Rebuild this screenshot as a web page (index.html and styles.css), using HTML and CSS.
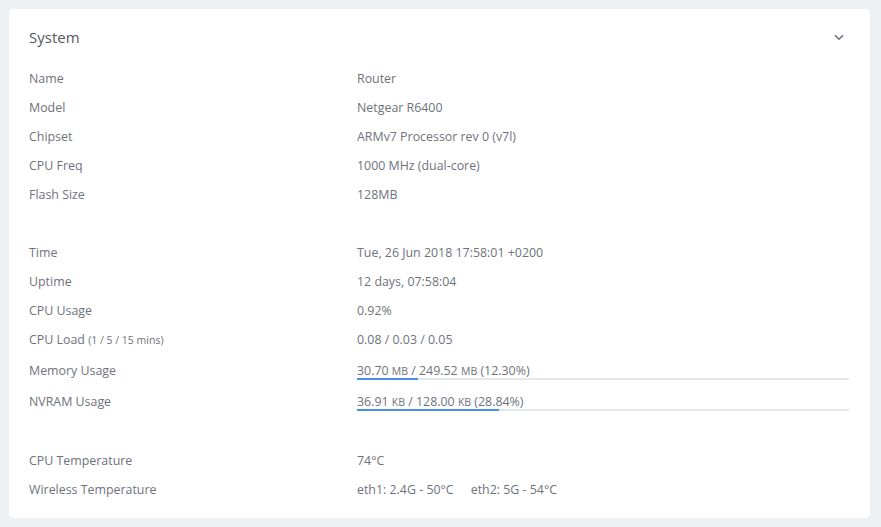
FILE: index.html
```html
<!DOCTYPE html>
<html>
<head>
<meta charset="utf-8">
<link rel="stylesheet" href="styles.css">
</head>
<body>
<div class="card">
  <div class="card-header">
    <span class="title">System</span>
    <svg class="chevron" width="10" height="7" viewBox="0 0 10 7"><path d="M1 1.2 L5 5.2 L9 1.2" fill="none" stroke="#6b7385" stroke-width="1.6"/></svg>
  </div>
  <div class="card-body">
    <div class="row"><div class="label">Name</div><div class="value">Router</div></div>
    <div class="row"><div class="label">Model</div><div class="value">Netgear R6400</div></div>
    <div class="row"><div class="label">Chipset</div><div class="value">ARMv7 Processor rev 0 (v7l)</div></div>
    <div class="row"><div class="label">CPU Freq</div><div class="value">1000 MHz (dual-core)</div></div>
    <div class="row"><div class="label">Flash Size</div><div class="value">128MB</div></div>
    <div class="spacer"></div>
    <div class="row"><div class="label">Time</div><div class="value">Tue, 26 Jun 2018 17:58:01 +0200</div></div>
    <div class="row"><div class="label">Uptime</div><div class="value">12 days, 07:58:04</div></div>
    <div class="row"><div class="label">CPU Usage</div><div class="value">0.92%</div></div>
    <div class="row"><div class="label">CPU Load <small>(1 / 5 / 15 mins)</small></div><div class="value">0.08 / 0.03 / 0.05</div></div>
    <div class="row bar-row">
      <div class="label">Memory Usage</div>
      <div class="value">
        <div class="bar-text">30.70 <small>MB</small> / 249.52 <small>MB</small> (12.30%)</div>
        <div class="track"><div class="fill" style="width:12.30%"></div></div>
      </div>
    </div>
    <div class="row bar-row">
      <div class="label">NVRAM Usage</div>
      <div class="value">
        <div class="bar-text">36.91 <small>KB</small> / 128.00 <small>KB</small> (28.84%)</div>
        <div class="track"><div class="fill" style="width:28.84%"></div></div>
      </div>
    </div>
    <div class="spacer spacer-wide"></div>
    <div class="row"><div class="label">CPU Temperature</div><div class="value">74°C</div></div>
    <div class="row"><div class="label">Wireless Temperature</div><div class="value"><span class="eth">eth1: 2.4G - 50°C</span><span>eth2: 5G - 54°C</span></div></div>
  </div>
</div>
</body>
</html>
```

FILE: styles.css
```css
html, body {
  margin: 0;
  padding: 0;
  background: #eef1f3;
}
body {
  padding: 9px 11px 8px 9px;
  font-family: "Open Sans", "Noto Sans", sans-serif;
  font-size: 12.4px;
  color: #6f727c;
}
.card {
  background: #ffffff;
  border-radius: 5px;
  padding: 0 21px 14px 20px;
}
.card-header {
  display: flex;
  align-items: center;
  justify-content: space-between;
  padding-top: 17px;
  height: 22px;
  margin-bottom: 1px;
}
.title {
  font-size: 15px;
  line-height: 22px;
  color: #555861;
}
.chevron {
  margin-right: 5px;
  margin-top: 0;
}
.card-body {
  padding-top: 15px;
}
.row {
  display: flex;
  height: 29px;
  line-height: 29px;
}
.label {
  width: 40%;
  flex: none;
}
.label small {
  font-size: 10.5px;
}
.value {
  flex: 1;
}
.spacer {
  height: 29px;
}
.spacer-wide {
  height: 30px;
}
.bar-row {
  height: 31px;
  line-height: 16px;
}
.bar-row .label {
  padding-top: 9px;
}
.bar-row .value {
  padding-top: 8px;
}
.bar-text {
  height: 16px;
  line-height: 18px;
}
.bar-text small {
  font-size: 10.5px;
}
.track {
  height: 2px;
  background: #e3e7ea;
}
.fill {
  height: 2px;
  background: #4a90e2;
}
.eth {
  margin-right: 17px;
}
```
